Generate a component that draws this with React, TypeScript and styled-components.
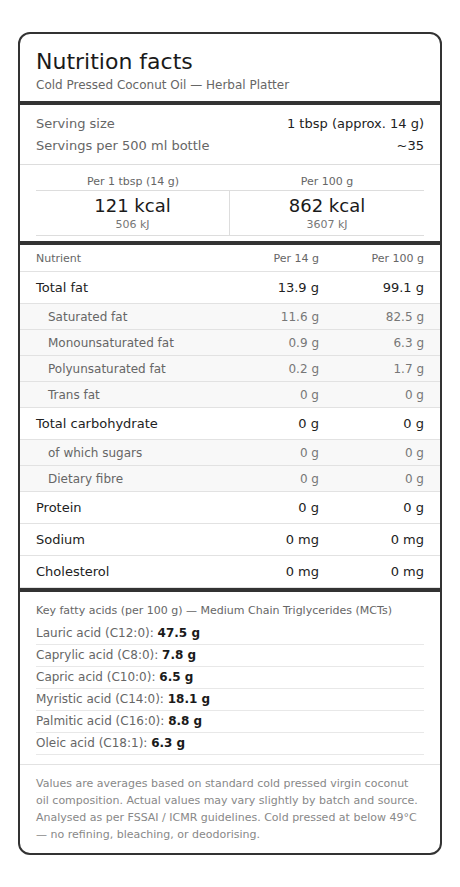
import styled, { createGlobalStyle } from "styled-components";

const GlobalStyle = createGlobalStyle`
  body {
    margin: 0;
    background: #fff;
    font-family: "DejaVu Sans", Verdana, sans-serif;
    color: #222;
  }
`;

const Card = styled.div`
  margin: 32px 18px;
  border: 2px solid #333;
  border-radius: 12px;
  overflow: hidden;
  background: #fff;
`;

const Header = styled.header`
  padding: 15px 16px 9px;
  border-bottom: 4px solid #333;
  h1 {
    margin: 0;
    font-size: 22px;
    font-weight: 400;
    line-height: 1.2;
    color: #1a1a1a;
  }
  p {
    margin: 3px 0 0;
    font-size: 12px;
    line-height: 14px;
    color: #666;
  }
`;

const Serving = styled.section`
  padding: 8px 16px 7px;
  border-bottom: 1px solid #ddd;
`;

const ServingRow = styled.div`
  display: flex;
  justify-content: space-between;
  font-size: 13px;
  line-height: 22px;
  span:first-child {
    color: #666;
  }
  span:last-child {
    color: #222;
  }
`;

const Energy = styled.section`
  padding: 10px 16px 5px;
  border-bottom: 4px solid #333;
  display: grid;
  grid-template-columns: 1fr 1fr;
`;

const EnergyHead = styled.div`
  text-align: center;
  font-size: 11px;
  line-height: 13px;
  color: #666;
  padding-bottom: 2px;
  border-bottom: 1px solid #ddd;
`;

const EnergyCell = styled.div<{ $first?: boolean }>`
  text-align: center;
  padding: 5px 0 4px;
  border-bottom: 1px solid #ddd;
  border-right: ${(p) => (p.$first ? "1px solid #ddd" : "none")};
  strong {
    display: block;
    font-size: 18px;
    font-weight: 400;
    line-height: 20px;
    color: #1a1a1a;
  }
  small {
    display: block;
    margin-top: 2px;
    font-size: 11px;
    line-height: 13px;
    color: #777;
  }
`;

const Table = styled.section`
  border-bottom: 4px solid #333;
`;

const Row = styled.div<{ $kind: "head" | "main" | "sub" }>`
  display: grid;
  grid-template-columns: 1fr 90px 105px;
  padding: ${(p) =>
    p.$kind === "main" ? "8px 16px" : p.$kind === "sub" ? "6px 16px 4px 28px" : "7px 16px 6px"};
  line-height: ${(p) => (p.$kind === "head" ? "13px" : "15px")};
  font-size: ${(p) => (p.$kind === "main" ? "13px" : p.$kind === "sub" ? "12px" : "11px")};
  background: ${(p) => (p.$kind === "sub" ? "#f8f8f8" : "#fff")};
  color: ${(p) => (p.$kind === "main" ? "#222" : "#666")};
  border-bottom: 1px solid #e2e2e2;
  span:not(:first-child) {
    text-align: right;
    color: ${(p) => (p.$kind === "main" ? "#222" : p.$kind === "sub" ? "#777" : "#666")};
  }
`;

const Acids = styled.section`
  padding: 11px 16px 9px;
  border-bottom: 1px solid #e2e2e2;
  h2 {
    margin: 0 0 4px;
    font-size: 11px;
    font-weight: 400;
    line-height: 16px;
    color: #666;
  }
`;

const AcidItem = styled.div`
  font-size: 12px;
  line-height: 21px;
  color: #666;
  border-bottom: 1px solid #e8e8e8;
  b {
    color: #1a1a1a;
  }
`;

const Footer = styled.footer`
  padding: 10px 16px 10px;
  font-size: 11px;
  line-height: 17px;
  color: #888;
`;

const nutrients: { kind: "main" | "sub"; name: string; a: string; b: string }[] = [
  { kind: "main", name: "Total fat", a: "13.9 g", b: "99.1 g" },
  { kind: "sub", name: "Saturated fat", a: "11.6 g", b: "82.5 g" },
  { kind: "sub", name: "Monounsaturated fat", a: "0.9 g", b: "6.3 g" },
  { kind: "sub", name: "Polyunsaturated fat", a: "0.2 g", b: "1.7 g" },
  { kind: "sub", name: "Trans fat", a: "0 g", b: "0 g" },
  { kind: "main", name: "Total carbohydrate", a: "0 g", b: "0 g" },
  { kind: "sub", name: "of which sugars", a: "0 g", b: "0 g" },
  { kind: "sub", name: "Dietary fibre", a: "0 g", b: "0 g" },
  { kind: "main", name: "Protein", a: "0 g", b: "0 g" },
  { kind: "main", name: "Sodium", a: "0 mg", b: "0 mg" },
  { kind: "main", name: "Cholesterol", a: "0 mg", b: "0 mg" },
];

const acids = [
  ["Lauric acid (C12:0)", "47.5 g"],
  ["Caprylic acid (C8:0)", "7.8 g"],
  ["Capric acid (C10:0)", "6.5 g"],
  ["Myristic acid (C14:0)", "18.1 g"],
  ["Palmitic acid (C16:0)", "8.8 g"],
  ["Oleic acid (C18:1)", "6.3 g"],
];

function App() {
  return (
    <>
      <GlobalStyle />
      <Card>
        <Header>
          <h1>Nutrition facts</h1>
          <p>Cold Pressed Coconut Oil — Herbal Platter</p>
        </Header>
        <Serving>
          <ServingRow>
            <span>Serving size</span>
            <span>1 tbsp (approx. 14 g)</span>
          </ServingRow>
          <ServingRow>
            <span>Servings per 500 ml bottle</span>
            <span>~35</span>
          </ServingRow>
        </Serving>
        <Energy>
          <EnergyHead>Per 1 tbsp (14 g)</EnergyHead>
          <EnergyHead>Per 100 g</EnergyHead>
          <EnergyCell $first>
            <strong>121 kcal</strong>
            <small>506 kJ</small>
          </EnergyCell>
          <EnergyCell>
            <strong>862 kcal</strong>
            <small>3607 kJ</small>
          </EnergyCell>
        </Energy>
        <Table>
          <Row $kind="head">
            <span>Nutrient</span>
            <span>Per 14 g</span>
            <span>Per 100 g</span>
          </Row>
          {nutrients.map((n) => (
            <Row key={n.name} $kind={n.kind}>
              <span>{n.name}</span>
              <span>{n.a}</span>
              <span>{n.b}</span>
            </Row>
          ))}
        </Table>
        <Acids>
          <h2>Key fatty acids (per 100 g) — Medium Chain Triglycerides (MCTs)</h2>
          {acids.map(([name, value]) => (
            <AcidItem key={name}>
              {name}: <b>{value}</b>
            </AcidItem>
          ))}
        </Acids>
        <Footer>
          Values are averages based on standard cold pressed virgin coconut oil composition.
          Actual values may vary slightly by batch and source. Analysed as per FSSAI / ICMR
          guidelines. Cold pressed at below 49°C — no refining, bleaching, or deodorising.
        </Footer>
      </Card>
    </>
  );
}

export default App;
